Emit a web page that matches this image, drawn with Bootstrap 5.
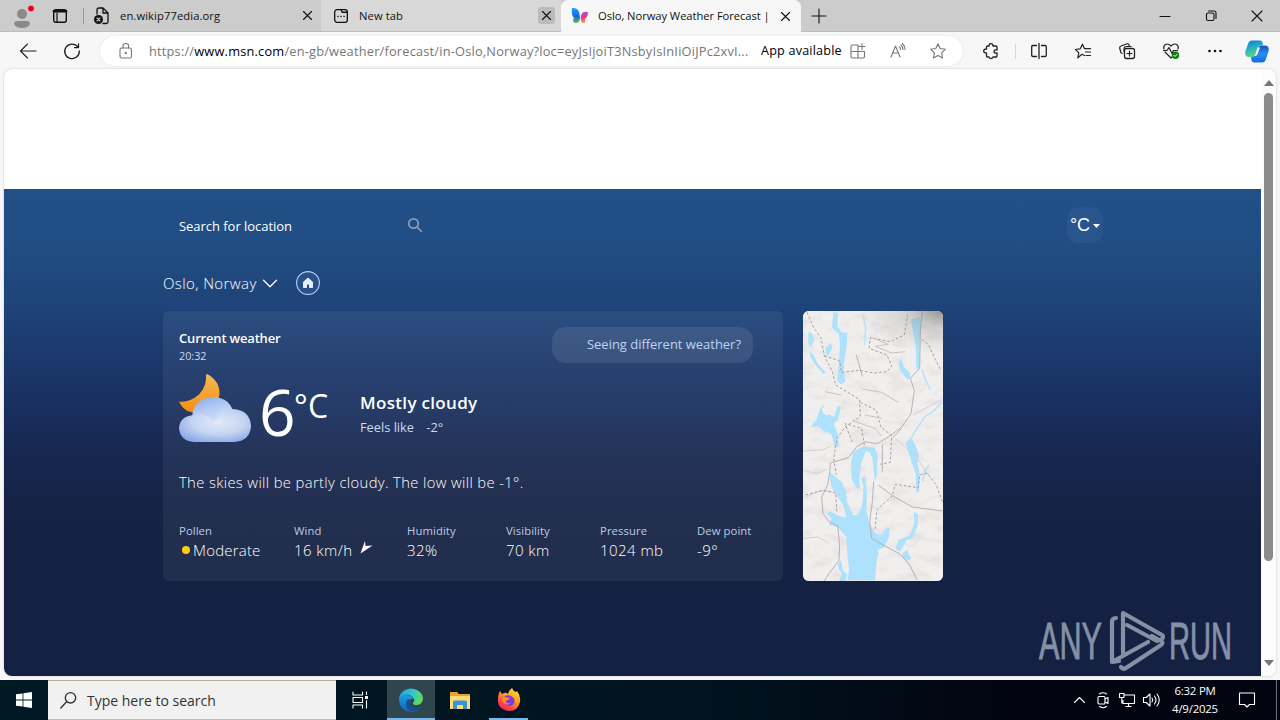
<!DOCTYPE html>
<html lang="en">
<head>
    <meta charset="UTF-8" />
    <title>Oslo, Norway Weather Forecast</title>
    <link href="https://cdn.jsdelivr.net/npm/bootstrap@5.3.3/dist/css/bootstrap.min.css" rel="stylesheet">
    <style>
        body { width: 1280px; height: 720px; font-family: "Open Sans", "Noto Sans", sans-serif; font-size: 13px; color: #111; background: #f7f7f7; }
        svg { display: block; flex: none; overflow: visible; }
        .ln { fill: none; stroke: currentColor; stroke-width: 1.1; stroke-linecap: round; stroke-linejoin: round; }

        /* tab strip */
        .tab-strip { height: 32px; background: #ccc; border-bottom: 1px solid #bdbdbd; font-size: 11.2px; }
        .tool-user { width: 84px; padding-left: 10px; border-right: 1px solid #999; height: 16px; }
        .edge-tab { height: 31px; width: 240px; padding: 0 6px 0 10px; letter-spacing: .1px; }
        .tab-one { width: 237px; padding-right: 5px; }
        .tab-two { background: #d8d8d8; padding-left: 13px; }
        .tab-on { background: #f7f7f7; height: 32px; margin-bottom: -1px; border-radius: 7px 7px 0 0; padding-right: 7px; letter-spacing: 0; }
        .tab-x { width: 17px; height: 17px; border-radius: 3px; }
        .tab-two .tab-x { background: #bbb; }
        .tab-title { width: 170px; padding-top: 1px; white-space: nowrap; }
        .tab-on .tab-title { width: 174px; margin-left: 9px; letter-spacing: -.05px; }
        .win-btn { width: 46px; }

        /* address bar */
        .toolbar { height: 37px; background: #f7f7f7; color: #222; padding: 1px 0 0 2px; }
        .nav-cell { width: 44px; }
        .omnibox { width: 863px; height: 30px; margin-left: 6px; border-radius: 15px; background: #fff; box-shadow: 0 0 2px #ddd; color: #777; }
        .url { width: 608px; font-size: 12.8px; color: #767676; letter-spacing: .2px; padding-top: 1px; }
        .url b { font-weight: 400; color: #000; }
        .app-av { width: 77px; color: #000; font-size: 12.6px; letter-spacing: .2px; }
        .pill-cell { width: 40px; }

        /* page */
        .page-wrap { width: 1272px; height: 607px; margin: 0 4px 4px; border-radius: 8px; overflow: hidden; background: #fff; box-shadow: 0 0 2px #bbb; }
        .ad-space { height: 120px; }
        .weather { height: 487px; padding-left: 159px; color: #fff;
            background: linear-gradient(#214f86 0, #214e85 50px, #1e4378 120px, #1a3365 195px, #17274f 265px, #152142 345px, #152142 100%); }
        .search-row { height: 36px; margin-top: 18px; padding-left: 16px; width: 940px; }
        .search-row .lbl { width: 228px; padding-top: 3px; letter-spacing: -.04px; }
        .unit-btn { width: 36px; height: 36px; border-radius: 12px; background: #29558c; font: 18px "Liberation Sans", sans-serif; padding-top: 1px; }
        .place { height: 24px; margin-top: 28px; font-size: 15px; font-weight: 300; letter-spacing: .4px; }
        .place .city { width: 100px; }
        .panel { width: 620px; height: 270px; border-radius: 6px; background: rgba(255,255,255,.06); padding: 16px 16px 0; }
        .map-box { width: 140px; height: 270px; border-radius: 6px; overflow: hidden; background: #efedec; }
        .soft { color: #ccdaf0; }
        .h-now { font-size: 13px; font-weight: 600; line-height: 22px; letter-spacing: -.18px; }
        .h-time { font-size: 10.8px; line-height: 14px; }
        .ask { width: 201px; height: 36px; border-radius: 14px; background: rgba(255,255,255,.09); color: #bcd4f5; padding-left: 35px; margin-right: 14px; font-size: 13px; letter-spacing: -.03px; }
        .now-row { height: 68px; margin-top: 11px; }
        .deg { font-size: 64px; line-height: 66px; width: 35px; margin-left: 8px; }
        .deg-c { font-size: 32px; font-weight: 400; line-height: 33px; width: 66px; letter-spacing: .2px; }
        .cond { font-size: 17px; font-weight: 600; line-height: 24px; letter-spacing: .32px; }
        .feels { font-size: 12.8px; line-height: 24px; }
        .brief { font-size: 14.8px; font-weight: 300; line-height: 24px; margin-top: 28px; letter-spacing: .36px; }
        .facts { display: grid; grid-template-columns: 115px 113px 99px 94px 97px auto; margin-top: 28px; }
        .facts dt { font-size: 11.3px; font-weight: 400; line-height: 17px; color: #bccbe4; letter-spacing: .08px; }
        .facts dd { font-size: 15px; font-weight: 300; line-height: 22px; margin: 0; letter-spacing: .45px; }
        .facts .tight { letter-spacing: .2px; }
        .dot { width: 8px; height: 8px; border-radius: 4px; background: #fdcb10; margin: 0 3px; }
        .brand-mark { right: 40px; bottom: 4px; }
        .scroll { width: 15px; background: #fcfcfc; }
        .thumb { width: 9px; height: 468px; border-radius: 5px; background: #8b8b8b; margin-top: 7px; }

        /* taskbar */
        .taskbar { height: 40px; color: #fff; background: linear-gradient(90deg, #001a23 0, #00131f 55%, #02040f 80%); }
        .task-cell { width: 49px; }
        .search-box { width: 288px; background: #f1f1f1; border-top: 1px solid #b5b1a5; border-bottom: 1px solid #bbb; color: #333; font-size: 14px; padding-left: 12px; }
        .on { background: #2f464e; border-bottom: 2px solid #76b9ed; }
        .run { background: linear-gradient(#76b9ed, #76b9ed) 5px bottom / 39px 2px no-repeat; }
        .tray-cell { width: 24px; }
        .clock { width: 64px; font-size: 11.4px; line-height: 18px; letter-spacing: -.2px; }
    </style>
</head>
<body class="d-flex flex-column overflow-hidden">
    <!-- Tabs -->
    <header class="tab-strip d-flex flex-shrink-0 align-items-center">
        <div class="tool-user d-flex align-items-center">
            <svg width="24" height="26"><circle cx="12" cy="11" r="5" fill="#8c8886"/><path d="M4 21q0-3 4-3h8q4 0 4 3-2 4-8 4t-8-4" fill="#8c8886"/><circle cx="21" cy="5.500" r="3.300" fill="#e5001c" stroke="#f3c6c6" stroke-width=".7"/></svg>
            <svg width="14" height="14" style="margin-left:19px" class="ln"><rect x=".7" y=".7" width="12.600" height="12.600" rx="2" stroke-width="1.400"/><path d="M1 2.200h12" stroke-width="2.600"/><path d="M4 4v9" stroke-width="1.200"/></svg>
        </div>
        <div class="edge-tab tab-one d-flex align-items-center">
            <svg width="16" height="18" class="ln"><path d="M3 7V3q0-2 2-2h4l5 5v9q0 1.500-2 1.500H9M9 1v5h5" stroke-width="1.300"/><circle cx="4.500" cy="12.500" r="4.500" fill="#111" stroke="none"/><path d="M3 11l3 3m0-3l-3 3" stroke="#ccc"/></svg>
            <div class="tab-title" style="margin-left:10px">en.wikip77edia.org</div>
            <div class="tab-x d-flex align-items-center justify-content-center ms-auto"><svg width="9" height="9" class="ln"><path d="M.5 .5l8 8m0-8l-8 8"/></svg></div>
        </div>
        <div class="edge-tab tab-two d-flex align-items-center">
            <svg width="14" height="14" class="ln"><rect x=".7" y=".7" width="12.600" height="12.600" rx="2.200" stroke-width="1.300"/><path d="M7 .8l1.200 2.400h5M4 7.500h.1M7 7.500h.1M10 7.500h.1" stroke-width="1.400"/></svg>
            <div class="tab-title" style="margin-left:11px">New tab</div>
            <div class="tab-x d-flex align-items-center justify-content-center ms-auto"><svg width="9" height="9" class="ln"><path d="M.5 .5l8 8m0-8l-8 8"/></svg></div>
        </div>
        <div class="edge-tab tab-on d-flex align-items-center">
            <svg width="18" height="18">
                <defs>
                    <linearGradient id="mL" x2="0" y2="1"><stop offset="0" stop-color="#19a9f4"/><stop offset=".55" stop-color="#1b63e0"/><stop offset="1" stop-color="#56c04a"/></linearGradient>
                    <linearGradient id="mR" x2="0" y2="1"><stop offset="0" stop-color="#a54bea"/><stop offset=".5" stop-color="#f0357c"/><stop offset="1" stop-color="#fb9a3a"/></linearGradient>
                </defs>
                <path d="M1 1q7-1 7.500 6.500L9 10q0 6-4.500 6-4-1-1.500-5Q0 8 1 1" fill="url(#mL)"/><path d="M17 5q-6-1.500-7 4l-.3 3q.5 4 3 4 2.300-.5 1-4 3.300-2 3.300-7" fill="url(#mR)"/>
            </svg>
            <div class="tab-title">Oslo, Norway Weather Forecast |</div>
            <div class="tab-x d-flex align-items-center justify-content-center ms-auto"><svg width="9" height="9" class="ln"><path d="M.5 .5l8 8m0-8l-8 8"/></svg></div>
        </div>
        <svg width="14" height="14" class="ln" style="margin-left:11px"><path d="M7 0v14M0 7h14"/></svg>
        <div class="d-flex ms-auto">
            <div class="win-btn d-flex justify-content-center"><svg width="10" height="10" class="ln"><path d="M0 5.500h10"/></svg></div>
            <div class="win-btn d-flex justify-content-center"><svg width="10" height="10" class="ln"><rect x=".5" y="2" width="7.500" height="7.500" rx="1.500"/><path d="M2.500 0H8q2 0 2 2v5.500"/></svg></div>
            <div class="win-btn d-flex justify-content-center"><svg width="10" height="10" class="ln"><path d="M0 0l10 10m0-10L0 10"/></svg></div>
        </div>
    </header>

    <!-- Address bar -->
    <nav class="toolbar d-flex flex-shrink-0 align-items-center">
        <div class="nav-cell d-flex justify-content-center ms-1"><svg width="16" height="16" class="ln"><path d="M16 8H.5M7.500 1L.5 8l7 7"/></svg></div>
        <div class="nav-cell d-flex justify-content-center"><svg width="16" height="16" class="ln"><path d="M14 4.200A7.300 7.300 0 1 0 15.300 8M14.500 .8v3.800h-4" stroke-width="1.300"/></svg></div>
        <div class="omnibox d-flex align-items-center">
            <svg width="14" height="16" class="ln" style="margin-left:19px"><rect x="1" y="5" width="11.500" height="10" rx="1.800"/><path d="M4 5V3q0-2.500 2.800-2.500T9.600 3v2"/><circle cx="6.800" cy="10" r=".6" fill="currentColor"/></svg>
            <div class="url text-nowrap" style="margin-left:16px">https://<b>www.msn.com</b>/en-gb/weather/forecast/in-Oslo,Norway?loc=eyJsIjoiT3NsbyIsInIiOiJPc2xvI...</div>
            <div class="app-av text-nowrap" style="margin-left:4px">App available</div>
            <div class="pill-cell d-flex justify-content-center"><svg width="16" height="16" class="ln"><path d="M8 2H2.500Q1 2 1 3.500v10Q1 15 2.500 15H13q1.500 0 1.500-1.500V8.500H1M8 2v13M12 .5v6M9 3.500h6"/></svg></div>
            <div class="pill-cell d-flex justify-content-center"><svg width="16" height="16" class="ln"><path d="M1 14L5.500 3 10 14M2.600 10h5.800M9.500 4q1 1 1 2.500M11 2q2 2 2 4.500M12.500 .5Q15 3 15 6.500"/></svg></div>
            <div class="pill-cell d-flex justify-content-center"><svg width="16" height="16" class="ln"><path d="M8 .8l2.200 4.700 5.200.7-3.800 3.600.9 5.200L8 12.500 3.500 15l.9-5.200L.6 6.200l5.200-.7z"/></svg></div>
        </div>
        <div class="nav-cell d-flex justify-content-center" style="margin-left:6px"><svg width="16" height="16" class="ln"><path d="M6 3q0-2.300 2-2.300T10 3h3q1 0 1 1v3q-3-.5-3 1.500T14 10v3q0 1-1 1h-3q0 1.500-2 1.500T6 14H4.500q-1 0-1-1v-3Q.7 10 .7 8t2.800-2V4q0-1 1-1z" stroke-width="1.300"/></svg></div>
        <div class="vr bg-secondary" style="height:15px;align-self:center;margin-left:2px"></div>
        <div class="nav-cell d-flex justify-content-center" style="margin-left:1px"><svg width="16" height="16" class="ln"><path d="M8 .5v15M5.500 2.500H2q-1.300 0-1.300 1.300v8.400q0 1.300 1.300 1.300h3.500M10.500 2.500H14q1.300 0 1.300 1.300v8.400q0 1.300-1.300 1.300h-3.500" stroke-width="1.300"/></svg></div>
        <div class="nav-cell d-flex justify-content-center"><svg width="16" height="16" class="ln"><path d="M9.500 12.500L7 11.200 2.800 14.800l1-5L.5 6.500l4.700-.7L7.500 1.200l2 4.500h6M10.500 9h5M11 12.500h4.500" stroke-width="1.200"/></svg></div>
        <div class="nav-cell d-flex justify-content-center"><svg width="16" height="16" class="ln"><rect x="5.500" y="5.500" width="10" height="10" rx="2" stroke-width="1.300"/><path d="M10.500 8v5M8 10.500h5M3.200 10.500Q2 10.300 1.700 9L.7 5Q.4 3.500 2 3L8 .8q1.500-.3 2 1l.3 1.200M5 8.500V6q0-2.500 2.500-2.500H12" stroke-width="1.200"/></svg></div>
        <div class="nav-cell d-flex justify-content-center"><svg width="16" height="16" class="ln"><path d="M1 6Q0 3 2.500 1.500T8 3q3-3 5.500-1.500T15 6M2 9l6 6 1-1M.5 7.500H4L6 4.500l3 6 1.500-3h4" stroke-width="1.200"/><circle cx="12.500" cy="12.300" r="3.700" fill="#107c10" stroke="none"/><path d="M10.800 12.300l1.200 1.200 2.200-2.300" stroke="#fff" stroke-width="1"/></svg></div>
        <div class="nav-cell d-flex justify-content-center"><svg width="14" height="4" fill="#111"><circle cx="1.500" cy="2" r="1.300"/><circle cx="7" cy="2" r="1.300"/><circle cx="12.500" cy="2" r="1.300"/></svg></div>
        <svg width="24" height="23" style="margin-left:8px">
            <defs>
                <linearGradient id="cA" x2=".3" y2="1"><stop offset="0" stop-color="#1478c8"/><stop offset=".5" stop-color="#23b0c8"/><stop offset="1" stop-color="#58d878"/></linearGradient>
                <linearGradient id="cB" x2="0" y2="1"><stop offset="0" stop-color="#1b4fc4"/><stop offset=".5" stop-color="#2890f0"/><stop offset="1" stop-color="#1668e8"/></linearGradient>
            </defs>
            <path d="M7 .5h8q2 0 2.500 2L18 5q-4 0-5 3l-2 6q-1 3-3 3H3q-4-1-2.500-6L3 4q1-3.500 4-3.500" fill="url(#cA)"/>
            <path d="M17 22.500H9q-2 0-2.500-2L6 17q3 .5 4.500-2.500L13 8q1-2.500 3-2.500h4q5 .5 3.500 6L21 19q-1 3.500-4 3.500" fill="url(#cB)"/>
            <path d="M12.500 7.500H15l-2.300 6q-.8 2.500-3 2.500H9q1-.5 1.700-2.500z" fill="#fff"/>
        </svg>
    </nav>

    <!-- Weather page -->
    <main class="page-wrap d-flex flex-shrink-0 position-relative">
        <div class="flex-grow-1">
            <div class="ad-space"></div>
            <section class="weather d-flex flex-column">
                <div class="search-row d-flex align-items-center">
                    <div class="lbl">Search for location</div>
                    <svg width="16" height="16" fill="none" stroke="#8c9bb5" stroke-width="1.800"><circle cx="6.500" cy="6.500" r="4.700"/><path d="M10 10l4.800 5"/></svg>
                    <div class="unit-btn d-flex align-items-center justify-content-center ms-auto">°C<svg width="7" height="4" fill="#fff" style="margin-left:3px"><path d="M0 0h7L3.500 4z"/></svg></div>
                </div>
                <div class="place d-flex align-items-center">
                    <div class="city">Oslo, Norway</div>
                    <svg width="14" height="8" class="ln"><path d="M.5 1.300L7 7.700 13.500 1.300" stroke-width="1.300"/></svg>
                    <svg width="24" height="24" style="margin-left:19px"><circle cx="12" cy="12" r="11.400" fill="#29508a" stroke="#b9d2f5" stroke-width="1.100"/><path d="M12 7l4.500 4v5.500h-3V13h-3v3.500h-3V11z" fill="#e6effd" stroke="#e6effd" stroke-linejoin="round"/></svg>
                </div>
                <div class="d-flex" style="gap:20px;margin-top:16px">
                    <div class="panel">
                        <div class="d-flex justify-content-between">
                            <div>
                                <div class="h-now">Current weather</div>
                                <div class="h-time soft">20:32</div>
                            </div>
                            <div class="ask d-flex align-items-center">Seeing different weather?</div>
                        </div>
                        <div class="now-row d-flex">
                            <svg width="72" height="68">
                                <defs>
                                    <linearGradient id="moon" x2="0" y2="1"><stop offset="0" stop-color="#f3b958"/><stop offset="1" stop-color="#f78d10"/></linearGradient>
                                    <linearGradient id="puff" x2=".4" y2="1"><stop offset="0" stop-color="#86aaea"/><stop offset=".6" stop-color="#c0d3f5"/><stop offset="1" stop-color="#d5e2f8"/></linearGradient>
                                    <radialGradient id="base" cx=".55" cy=".4" r=".65"><stop offset="0" stop-color="#e1e9f6"/><stop offset=".55" stop-color="#c6d5f2"/><stop offset="1" stop-color="#8babe8"/></radialGradient>
                                </defs>
                                <path d="M28 0q13 7 12.500 20-2 17-21 19Q5 39 0 27.500q10 1.500 20-7Q28 12 27 1z" fill="url(#moon)"/>
                                <path d="M13 44q1-20 22-21 15 1 19 14l-8 18H18z" fill="url(#puff)"/>
                                <path d="M15 41q11-3 20 7 6-13 19-13 17 1 18 17-1 15-17 16H15Q1 67 0 54 1 42 15 41" fill="url(#base)"/>
                            </svg>
                            <div class="deg" style="padding-top:5px">6</div>
                            <div class="deg-c" style="padding-top:15px">°C</div>
                            <div style="padding-top:17px">
                                <div class="cond">Mostly cloudy</div>
                                <div class="feels soft">Feels like <span style="margin-left:9px">-2°</span></div>
                            </div>
                        </div>
                        <div class="brief">The skies will be partly cloudy. The low will be -1°.</div>
                        <dl class="facts mb-0">
                            <div><dt>Pollen</dt><dd class="tight d-flex align-items-center"><span class="dot"></span>Moderate</dd></div>
                            <div><dt>Wind</dt><dd class="d-flex">16 km/h<svg width="12" height="13" style="margin:2px 0 0 7px"><path d="M5 0l.5 5 7-.5L.5 12.500z" fill="#fff"/></svg></dd></div>
                            <div><dt>Humidity</dt><dd>32%</dd></div>
                            <div><dt>Visibility</dt><dd>70 km</dd></div>
                            <div><dt>Pressure</dt><dd>1024 mb</dd></div>
                            <div><dt>Dew point</dt><dd>-9°</dd></div>
                        </dl>
                    </div>
                    <div class="map-box">
                        <svg width="140" height="270" viewBox="24 18 420 810">
                            <defs>
                                <radialGradient id="dusk" cx="444" cy="18" r="130" gradientUnits="userSpaceOnUse" gradientTransform="translate(-444 0) scale(2 1)"><stop offset="0" stop-color="#777" stop-opacity=".75"/><stop offset=".4" stop-color="#888" stop-opacity=".3"/><stop offset="1" stop-color="#999" stop-opacity="0"/></radialGradient>
                                <filter id="relief" x="0" y="0" width="1" height="1"><feTurbulence type="fractalNoise" baseFrequency=".018 .035" numOctaves="4" seed="7"/><feColorMatrix values="0 0 0 0 .5  0 0 0 0 .48  0 0 0 0 .47  1.800 0 0 0 -.86"/></filter>
                            </defs>
                            <rect x="24" y="18" width="420" height="810" fill="#f1efee"/>
                            <rect x="24" y="18" width="420" height="810" filter="url(#relief)" opacity=".35"/>
                            <!-- water -->
                            <g fill="#aee1fb">
                                <path d="M115 22l14 2-2 40 12 18 18 2-2 40-6 34-4 38 6 34-14 8-10-12 4-40 4-70-4-30-20-18z"/>
                                <path d="M92 128l16-14 4 14-10 22-10-2zM40 80l12 6 6 20-10 20-8-10zM44 140l10 6 14 30 24 26-6 6-26-30-14-22z"/>
                                <path d="M46 366l18-22 10-30 12-14 6 22 24 14 14-34 8 4-10 40-12 10 12 30 4 40-14-6-10-34-26-10-12-12z"/>
                                <path d="M348 42l28-6 2 40-4 36-2 80h-8l-2-70-8-40zM318 160l10 28 16 14 2 18-8 4-22-26-6-26z"/>
                                <path d="M168 470l8-30 30-16 32 4 10 18-2 64-6 20-8-70-8-18-12-4-14 40-6 50 4 20-10 4-16-28z"/>
                                <path d="M104 500l14 14 22 16 14 32 2 30 20 40 16-6 10-30 4-50-8-26 14-4 4 50-2 54 10 36 18 30 16 4 16-20h10l-2 26-14 30-22 10 6 10-6 14-6 66H158l4-30-6-60-2-40-26-30-26-6 8-20-14-14 10-8 24 14 24 6-8-36-16-24-22-36z"/>
                                <path d="M332 414l16-18 16 30 8 26-4 20 6 36-2 54h-8l-2-56-16-46-6-20z"/>
                                <path d="M356 620l14 8-2 36-16 36-18 6-18 34-14-8 8-28 34-12 14-36zM322 744l16-10 2 14 10 10-12 10-14-8zM128 776l10-10 6 30 12 12-4 20h-20l8-24-10-14z"/>
                            </g>
                            <g fill="none" stroke="#b8e3f9" stroke-width="5"><path d="M440 290q-20 30-50 44l-30 46-16 28M204 30l8 40-4 50M380 194l16 40 10 20M402 480l-14 20-4 30"/></g>
                            <path d="M80 310q20-10 30 8l-14 14q-14-4-16-22" fill="#f1efee"/>
                            <!-- roads -->
                            <g fill="none" stroke="#b5abb0" stroke-width="2.800" stroke-linejoin="round">
                                <path d="M382 20l-6 60-2 110-28 30 12 36-10 70-28 40-40 30-34 20-36-6-24 14-26 34-54 16-2 30-6 36-18 36 4 50 20 26 24 10 6 60-2 44-30 40-14 22"/>
                                <path d="M236 530l-4 60-8 60 6 50 34 20 50 26 30 34 22 44M250 540l42 32 60 34 90 12M262 420v80M184 150l18 64M292 400l28-30"/>
                                <path d="M24 438l60-4 22-10M24 496l42 10 30-14M30 580q40-30 80-20M24 700l46-4 34 20M300 400l60 50 40 60M354 330l86-46" stroke="#d3cecd"/>
                            </g>
                            <g fill="none" stroke="#a89fa1" stroke-width="3" stroke-dasharray="8 6">
                                <path d="M36 22l20 46 22 30 10 54 24 48 10 40 72 44 2 50-46 32-24 34-10 60 8 50M88 152l46 16 6 34 50-6 50 8 36-4 14-16-14-34-54-20 4-32 60 12 42-20 10-60M196 292l48 24 14 50 32 26-4 80-30 6M380 104l20 14 20 44 18 34M208 420l-8-50-50-14 24 60M32 570l50-14 40 8 4 60M442 590l-18-50-28-36-22 6-4 38-70-10-8 34-46 42-6 60"/>
                            </g>
                            <path d="M230 98l50 20-40 6 50 20 40-4M200 252l60 10 50 30M180 350l60 20 20 24M90 260l50 10M210 330l50 10" fill="none" stroke="#c9c4c2" stroke-width="3"/>
                            <rect x="24" y="18" width="420" height="200" fill="url(#dusk)"/>
                        </svg>
                    </div>
                </div>
            </section>
        </div>
        <div class="scroll d-flex flex-column align-items-center">
            <svg width="10" height="6" fill="#777" style="margin-top:11px"><path d="M5 0l5 6H0z"/></svg>
            <div class="thumb"></div>
            <svg width="10" height="6" fill="#777" class="mt-auto" style="margin-bottom:10px"><path d="M5 6l5-6H0z"/></svg>
        </div>
        <div class="brand-mark position-absolute">
            <svg width="198" height="62">
                <g fill="#8490a5" stroke="#8490a5" stroke-width=".9" font-family="Liberation Sans Narrow, Liberation Sans, sans-serif" font-size="52">
                    <text x="1" y="49" textLength="63" lengthAdjust="spacingAndGlyphs">ANY</text>
                    <text x="131" y="49" textLength="63" lengthAdjust="spacingAndGlyphs">RUN</text>
                </g>
                <g fill="none" stroke="#8490a5" stroke-width="4.200" stroke-linejoin="round" stroke-linecap="round">
                    <path d="M78 8q-4 0-4 4v40l36-20M85 43V3l39 22q2 1 0 4M89 15l30 16M83 57q2 3 5 1l35-23q3-2 0-4l-9-5M74 52l7-1"/>
                </g>
            </svg>
        </div>
    </main>

    <!-- Taskbar -->
    <footer class="taskbar d-flex flex-shrink-0">
        <div class="d-flex align-items-center justify-content-center" style="width:48px"><svg width="16" height="16" fill="#fff"><path d="M0 2.300L6.600 1.400v6.200H0zM7.400 1.300L16 0v7.600H7.400zM0 8.400h6.600v6.200L0 13.700zM7.400 8.400H16V16l-8.600-1.300z"/></svg></div>
        <div class="search-box d-flex align-items-center">
            <svg width="16" height="17" class="ln" style="margin-right:11px"><circle cx="10.500" cy="5.800" r="5.200" stroke-width="1.400"/><path d="M6.800 9.600L.8 16" stroke-width="1.400"/></svg>Type here to search
        </div>
        <div class="d-flex align-items-center justify-content-center" style="width:51px;padding-right:2px"><svg width="17" height="16" class="ln"><path d="M1 0v3h9.500V0M1 16v-3h9.500v3M1 5.500h9.500v5H1zM14.500 0v2.500M14.500 8.500V16"/><path d="M13 4h3v3h-3z" fill="#fff" stroke="none"/></svg></div>
        <div class="on d-flex align-items-center justify-content-center" style="width:48px;padding-top:2px">
            <svg width="24" height="24">
                <defs>
                    <linearGradient id="eT" x2="1" y2=".3"><stop offset="0" stop-color="#1a9be0"/><stop offset=".6" stop-color="#35c5d0"/><stop offset="1" stop-color="#60d858"/></linearGradient>
                    <linearGradient id="eB" x2="0" y2="1"><stop offset="0" stop-color="#1e9be3"/><stop offset="1" stop-color="#0f64b4"/></linearGradient>
                </defs>
                <path d="M0 12Q0 5 6 2T18 2q6 3 6 9-1 6-7 6-3 0-3-2 2-2 1-4-3-5-9-4Q2 8 0 12" fill="url(#eT)"/>
                <path d="M0 12Q2 7 7 7t8 4q-4-1-5 3 0 6 6 7 3 0 6-2-4 5-10 5Q1 23 0 12" fill="url(#eB)"/>
                <path d="M8 12q-3 7 3 11 7 1 11-4-4 2-8 0-5-3-3-8z" fill="#154f91"/>
            </svg>
        </div>
        <div class="task-cell d-flex align-items-center justify-content-center">
            <svg width="22" height="19"><path d="M1 1h7l2 2h11v15H1z" fill="#e9a52b"/><path d="M1 5h20v13H1z" fill="#fbdc74"/><path d="M4 18v-7q0-1.500 1.500-1.500h11Q18 9.500 18 11v7h-4v-4H8v4z" fill="#3f92d2"/></svg>
        </div>
        <div class="task-cell run d-flex align-items-center justify-content-center">
            <svg width="24" height="24">
                <defs><linearGradient id="fx" x1=".8" x2=".2" y2="1"><stop offset="0" stop-color="#ffe33e"/><stop offset=".45" stop-color="#ff9322"/><stop offset=".8" stop-color="#fb3b4c"/><stop offset="1" stop-color="#e3197e"/></linearGradient></defs>
                <path d="M2 5l1-2 2 3q3-2 5-1l1 1q1-4 4-6 1 3 4 4l1-1q4 5 3 11-2 9-11 9Q2 22 1 14q-.5-5 1-9" fill="url(#fx)"/>
                <path d="M7 9q3-3 7-1 4 2 3.500 6-1 4-5.500 4-5-1-5-5l4-1 1-2z" fill="#7a3bd8"/><path d="M5 10q3-2 5 0 2 0 3-.5-1 3-4 3-1 2 2 3l3-.5q-3 3-6.500.5Q4 13 5 10" fill="#ff8a26"/>
            </svg>
        </div>
        <div class="d-flex align-items-center ms-auto">
            <div class="tray-cell d-flex justify-content-center"><svg width="11" height="6" class="ln"><path d="M.5 5.500l5-5 5 5"/></svg></div>
            <div class="tray-cell d-flex justify-content-center"><svg width="12" height="16" class="ln"><rect x="1" y="4.500" width="7" height="7.500" rx="1"/><path d="M8 7l3-1.500v6L8 10M2.500 2Q6-.5 9.500 2M2.500 14.500q3.500 2.500 7 0"/></svg></div>
            <div class="tray-cell d-flex justify-content-center"><svg width="16" height="14" class="ln"><path d="M5.500 2H15.500v8.500H4V7M9.500 10.500V13M6.500 13.500h6M.5 .5h4.500v4H.5zM2.800 4.500v6" stroke-linecap="butt"/></svg></div>
            <div class="tray-cell d-flex justify-content-center"><svg width="17" height="14" class="ln"><path d="M.5 4.500h2.700L7 1v12L3.200 9.500H.5zM9 5q1.500 2 0 4M11.500 3q3 4 0 8M14 1q4.500 6 0 12"/></svg></div>
            <div class="clock text-center">6:32 PM<br>4/9/2025</div>
            <div class="d-flex justify-content-center" style="width:40px"><svg width="16" height="16" class="ln"><path d="M.5 1h15v11.500h-5L8 15l-2.500-2.500h-5z"/></svg></div>
            <div class="border-start border-secondary" style="width:4px;height:40px;margin-left:9px"></div>
        </div>
    </footer>

    <script src="https://cdn.jsdelivr.net/npm/bootstrap@5.3.3/dist/js/bootstrap.bundle.min.js"></script>
</body>
</html>
